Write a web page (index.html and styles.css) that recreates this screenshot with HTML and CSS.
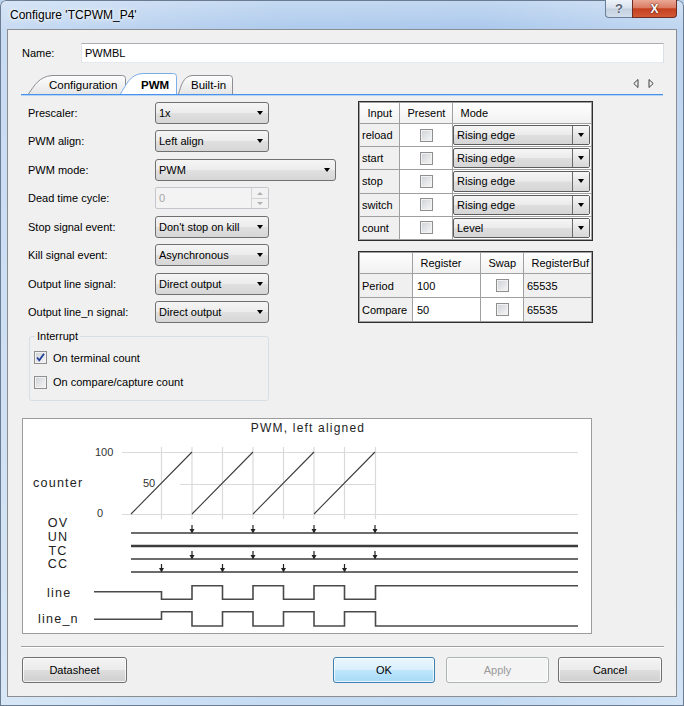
FILE: index.html
```html
<!DOCTYPE html>
<html>
<head>
<meta charset="utf-8">
<link rel="stylesheet" href="styles.css">
</head>
<body>
<div class="window">
  <div class="titlebar">
    <span class="title">Configure 'TCPWM_P4'</span>
    <div class="caption-btns">
      <span class="cbtn help">?</span>
      <span class="cbtn close">X</span>
    </div>
  </div>
  <div class="client">
    <div class="name-row">
      <span class="name-label">Name:</span>
      <div class="textbox">PWMBL</div>
    </div>
    <div class="tabstrip">
      <div class="tab tab-config">
        <svg class="tab-bg" width="98" height="19" viewBox="0 0 98 19"><defs><linearGradient id="tg1" x1="0" y1="0" x2="0" y2="1"><stop offset="0" stop-color="#fdfdfd"/><stop offset="1" stop-color="#e6e6e6"/></linearGradient></defs><path d="M0.5 19 C6 11 11 1.5 24 0.5 H94.5 Q97.5 0.5 97.5 3.5 V19" fill="url(#tg1)" stroke="#8c8e94"/></svg>
        <span class="tab-text">Configuration</span>
      </div>
      <div class="tab tab-pwm">
        <svg class="tab-bg" width="57" height="21" viewBox="0 0 57 21"><path d="M0.5 21 C6 12 10 1.5 22 0.5 H53.5 Q56.5 0.5 56.5 3.5 V21" fill="#ffffff" stroke="#7aaee8"/></svg>
        <span class="tab-text">PWM</span>
      </div>
      <div class="tab tab-builtin">
        <svg class="tab-bg" width="55" height="19" viewBox="0 0 55 19"><defs><linearGradient id="tg2" x1="0" y1="0" x2="0" y2="1"><stop offset="0" stop-color="#fdfdfd"/><stop offset="1" stop-color="#e6e6e6"/></linearGradient></defs><path d="M0.5 19 C3 11 5 1.5 14 0.5 H51.5 Q54.5 0.5 54.5 3.5 V19" fill="url(#tg2)" stroke="#8c8e94"/></svg>
        <span class="tab-text">Built-in</span>
      </div>
      <svg class="tab-arrows" width="22" height="9" viewBox="0 0 22 9"><path d="M5 0.5 V8.5 L0.8 4.5 Z" fill="none" stroke="#404040"/><path d="M16 0.5 V8.5 L20.2 4.5 Z" fill="none" stroke="#404040"/></svg>
    </div>

    <div class="page">
      <div class="top">
        <div class="form">
          <div class="fgrid">
            <span class="lbl">Prescaler:</span>
            <div class="select w114"><span>1x</span></div>
            <span class="lbl">PWM align:</span>
            <div class="select w114"><span>Left align</span></div>
            <span class="lbl">PWM mode:</span>
            <div class="select w181"><span>PWM</span></div>
            <span class="lbl">Dead time cycle:</span>
            <div class="spin w114"><span>0</span>
              <div class="spin-btns"><span class="sp-up"></span><span class="sp-down"></span></div>
            </div>
            <span class="lbl">Stop signal event:</span>
            <div class="select w114"><span>Don't stop on kill</span></div>
            <span class="lbl">Kill signal event:</span>
            <div class="select w114"><span>Asynchronous</span></div>
            <span class="lbl">Output line signal:</span>
            <div class="select w114"><span>Direct output</span></div>
            <span class="lbl">Output line_n signal:</span>
            <div class="select w114"><span>Direct output</span></div>
          </div>
          <fieldset class="group">
            <legend>Interrupt</legend>
            <div class="cbrow first"><span class="cb"><svg width="11" height="11" viewBox="0 0 11 11"><path d="M2 5.5 L4.3 8.3 L9 1.8" fill="none" stroke="#22409a" stroke-width="1.8"/></svg></span><span>On terminal count</span></div>
            <div class="cbrow"><span class="cb"></span><span>On compare/capture count</span></div>
          </fieldset>
        </div>

        <div class="tables">
          <div class="tbl tbl1">
            <div class="th">Input</div><div class="th">Present</div><div class="th">Mode</div>

            <div class="td rh">reload</div><div class="td cbc"><span class="cb"></span></div>
            <div class="td mc"><div class="combo"><span>Rising edge</span><span class="combo-btn"><i class="arrow"></i></span></div></div>

            <div class="td rh">start</div><div class="td cbc"><span class="cb"></span></div>
            <div class="td mc"><div class="combo"><span>Rising edge</span><span class="combo-btn"><i class="arrow"></i></span></div></div>

            <div class="td rh">stop</div><div class="td cbc"><span class="cb"></span></div>
            <div class="td mc"><div class="combo"><span>Rising edge</span><span class="combo-btn"><i class="arrow"></i></span></div></div>

            <div class="td rh">switch</div><div class="td cbc"><span class="cb"></span></div>
            <div class="td mc"><div class="combo"><span>Rising edge</span><span class="combo-btn"><i class="arrow"></i></span></div></div>

            <div class="td rh">count</div><div class="td cbc"><span class="cb"></span></div>
            <div class="td mc"><div class="combo"><span>Level</span><span class="combo-btn"><i class="arrow"></i></span></div></div>
          </div>

          <div class="tbl tbl2">
            <div class="th"></div><div class="th">Register</div><div class="th">Swap</div><div class="th">RegisterBuf</div>
            <div class="td rh">Period</div><div class="td wv">100</div><div class="td cbc"><span class="cb"></span></div><div class="td gv">65535</div>
            <div class="td rh">Compare</div><div class="td wv">50</div><div class="td cbc"><span class="cb"></span></div><div class="td gv">65535</div>
          </div>
        </div>
      </div>

      <div class="diagram">
        <svg width="570" height="216" viewBox="0 0 570 216">
          <rect x="0.5" y="0.5" width="569" height="215" fill="#ffffff" stroke="#9c9c9c"/>
          <text x="286" y="14" text-anchor="middle" class="ct">PWM, left aligned</text>
          <path d="M100 34.5H556 M100 96.5H556 M158 66.5H354 M139.5 29V101 M170 29V101 M200.5 29V101 M231 29V101 M261.5 29V101 M292 29V101 M322.5 29V101 M353.5 29V101" stroke="#dadada" stroke-width="1.2" fill="none"/>
          <path d="M109 96 L170 34 M170 96 L231 34 M231 96 L292 34 M292 96 L353 34" stroke="#3c3c3c" stroke-width="1.1" fill="none"/>
          <text x="73" y="37.5" class="num">100</text>
          <text x="121" y="69" class="num">50</text>
          <text x="75" y="99" class="num">0</text>
          <text x="11" y="68.5" class="lab">counter</text>
          <text x="36" y="109.3" text-anchor="middle" class="lab">OV</text>
          <text x="36" y="123" text-anchor="middle" class="lab">UN</text>
          <text x="36" y="136.5" text-anchor="middle" class="lab">TC</text>
          <text x="36" y="150.3" text-anchor="middle" class="lab">CC</text>
          <text x="25" y="178.5" class="lab">line</text>
          <text x="16" y="205" class="lab">line_n</text>
          <path d="M109 115H556 M109 141H556 M109 154H556" stroke="#3c3c3c" stroke-width="1.4" fill="none"/>
          <path d="M109 128H556" stroke="#3c3c3c" stroke-width="2.6" fill="none"/>
          <path d="M170 107V112 M231 107V112 M292 107V112 M353 107V112 M170 133V138 M231 133V138 M292 133V138 M353 133V138 M139.5 146V151 M200.5 146V151 M261.5 146V151 M322.5 146V151" stroke="#222" stroke-width="1.2" fill="none"/>
          <path d="M167.5 111H172.5L170 115.5Z M228.5 111H233.5L231 115.5Z M289.5 111H294.5L292 115.5Z M350.5 111H355.5L353 115.5Z M167.5 137H172.5L170 141.5Z M228.5 137H233.5L231 141.5Z M289.5 137H294.5L292 141.5Z M350.5 137H355.5L353 141.5Z M137 150H142L139.5 154.5Z M198 150H203L200.5 154.5Z M259 150H264L261.5 154.5Z M320 150H325L322.5 154.5Z" fill="#222"/>
          <path d="M72 173.7 H139.5 V181.3 H170 V167.7 H200.5 V181.3 H231 V167.7 H261.5 V181.3 H292 V167.7 H322.5 V181.3 H353.5 V167.7 H556" stroke="#4a4a4a" stroke-width="1.6" fill="none"/>
          <path d="M72 201.3 H139.5 V193.7 H170 V208 H200.5 V193.7 H231 V208 H261.5 V193.7 H292 V208 H322.5 V193.7 H353.5 V208 H556" stroke="#4a4a4a" stroke-width="1.6" fill="none"/>
        </svg>
      </div>
    </div>

    <div class="sep"></div>
    <div class="buttons">
      <div class="btn btn-datasheet">Datasheet</div>
      <div class="btn btn-ok">OK</div>
      <div class="btn btn-apply">Apply</div>
      <div class="btn btn-cancel">Cancel</div>
    </div>
  </div>
</div>
</body>
</html>
```

FILE: styles.css
```css
html, body {
  margin: 0;
  padding: 0;
}
body {
  font-family: "Liberation Sans", Arial, sans-serif;
  font-size: 11px;
  color: #000;
  background: #b9d2ee;
}
.window {
  width: 684px;
  height: 706px;
  box-sizing: border-box;
  overflow: hidden;
  background:
    linear-gradient(90deg, rgba(255,255,255,0.35) 0%, rgba(255,255,255,0.05) 40%, rgba(255,255,255,0) 70%, rgba(255,255,255,0.25) 100%),
    linear-gradient(180deg, #c3d8f1 0%, #aac8ec 30px, #b7d1ee 60%, #c2daf2 100%);
  box-shadow: inset 0 0 0 1px #6a7c92;
  border-radius: 6px 6px 0 0;
}
.titlebar {
  height: 29px;
  display: flex;
  align-items: flex-start;
  padding: 0 7px 0 10px;
}
.title {
  font-size: 12px;
  line-height: 12px;
  margin-top: 9px;
  color: #000;
  text-shadow: 0 0 6px #ffffff, 0 0 3px #ffffff;
}
.caption-btns {
  margin-left: auto;
  display: flex;
}
.cbtn {
  height: 18px;
  box-sizing: border-box;
  display: flex;
  align-items: center;
  justify-content: center;
  font-weight: bold;
  font-size: 13px;
}
.help {
  width: 27px;
  border: 1px solid #6a7f98;
  border-top: none;
  border-right: none;
  border-radius: 0 0 0 4px;
  background: linear-gradient(#eef3f9 0%, #d6e0ec 48%, #c3d0df 52%, #d2deeb 100%);
  color: #5a6676;
  text-shadow: 0 0 2px #fff;
}
.close {
  width: 45px;
  border: 1px solid #6e2d22;
  border-top: none;
  border-radius: 0 0 4px 0;
  background: linear-gradient(#e9a896 0%, #db7c64 45%, #c4401f 52%, #d35a36 100%);
  color: #ffffff;
  font-size: 12px;
  text-shadow: 0 0 2px #5a1a0e, 0 0 1px #5a1a0e;
}
.client {
  margin-left: 7px;
  width: 670px;
  height: 668px;
  box-sizing: border-box;
  border: 1px solid #8b8d90;
  background: #f0f0f0;
  position: relative;
}
.name-row {
  display: flex;
  align-items: center;
  margin-top: 13px;
  padding-left: 14px;
}
.name-label {
  width: 59px;
}
.textbox {
  width: 583px;
  height: 20px;
  box-sizing: border-box;
  border: 1px solid;
  border-color: #abadb3 #dbdfe6 #e3e9ef #e2e3ea;
  background: #ffffff;
  padding-left: 3px;
  display: flex;
  align-items: center;
}
.tabstrip {
  margin-top: 10px;
  margin-left: 13px;
  width: 642px;
  height: 21px;
  display: flex;
  align-items: flex-end;
  border-bottom: 1px solid #4a92e8;
  box-shadow: 0 1px 0 #b3d3f7;
}
.tab {
  position: relative;
  display: flex;
  align-items: center;
  box-sizing: border-box;
  font-size: 11.5px;
}
.tab-bg {
  position: absolute;
  left: 0;
  top: 0;
}
.tab-text {
  position: relative;
}
.tab-config {
  width: 98px;
  height: 19px;
  margin-left: 7px;
  padding-left: 21px;
  z-index: 1;
}
.tab-pwm {
  width: 57px;
  height: 21px;
  margin-left: -6px;
  padding-left: 21px;
  padding-top: 2px;
  font-weight: bold;
  z-index: 2;
}
.tab-builtin {
  width: 55px;
  height: 19px;
  margin-left: 1px;
  padding-left: 13px;
  z-index: 1;
}
.tab-arrows {
  align-self: flex-start;
  margin-top: 6px;
  margin-left: auto;
  margin-right: 8px;
}
.page {
  margin-left: 13px;
  width: 642px;
  padding-top: 6px;
}
.top {
  display: flex;
  align-items: flex-start;
}
.form {
  width: 337px;
  box-sizing: border-box;
  padding-left: 7px;
  margin-top: 1px;
}
.fgrid {
  display: grid;
  grid-template-columns: 127px auto;
  grid-auto-rows: 22px;
  row-gap: 6.43px;
  align-items: center;
}
.lbl {
  white-space: nowrap;
}
.w114 { width: 114px; }
.w181 { width: 181px; }
.select {
  height: 22px;
  box-sizing: border-box;
  border: 1px solid #707070;
  border-radius: 3px;
  background: linear-gradient(#f5f5f5 0%, #ececec 48%, #e0e0e0 52%, #d6d6d6 100%);
  display: flex;
  align-items: center;
  padding-left: 3px;
  white-space: nowrap;
}
.select::after {
  content: "";
  margin-left: auto;
  margin-right: 5px;
  border-left: 3.5px solid transparent;
  border-right: 3.5px solid transparent;
  border-top: 4px solid #000;
}
.spin {
  height: 22px;
  box-sizing: border-box;
  border: 1px solid #c3c6ca;
  border-radius: 2px;
  background: #f3f3f3;
  color: #a6a6a6;
  display: flex;
  align-items: center;
  padding-left: 3px;
}
.spin-btns {
  margin-left: auto;
  width: 16px;
  align-self: stretch;
  display: flex;
  flex-direction: column;
  border-left: 1px solid #d4d4d4;
}
.sp-up, .sp-down {
  flex: 1;
  display: flex;
  align-items: center;
  justify-content: center;
  background: #f2f2f2;
}
.sp-up {
  border-bottom: 1px solid #d4d4d4;
}
.sp-up::after {
  content: "";
  border-left: 3px solid transparent;
  border-right: 3px solid transparent;
  border-bottom: 3px solid #b0b0b0;
}
.sp-down::after {
  content: "";
  border-left: 3px solid transparent;
  border-right: 3px solid transparent;
  border-top: 3px solid #b0b0b0;
}
.group {
  margin: 7.5px 0 0 1px;
  width: 240px;
  box-sizing: border-box;
  border: 1px solid #d5dfe5;
  border-radius: 3px;
  padding: 0 4px 7.5px 4px;
  min-width: 0;
}
.group legend {
  padding: 0 2px;
  margin-left: 1px;
  line-height: 13px;
  height: 13px;
}
.cbrow {
  display: flex;
  align-items: center;
  height: 20px;
  gap: 6px;
  margin-top: 4.5px;
}
.cb {
  width: 13px;
  height: 13px;
  box-sizing: border-box;
  border: 1px solid #8f8f8f;
  background: linear-gradient(135deg, #cdd1d6 0%, #f7f7f7 100%);
  box-shadow: inset 0 0 0 1px #f2f2f2;
  display: inline-flex;
  align-items: center;
  justify-content: center;
  flex: none;
}
.tables {
  display: flex;
  flex-direction: column;
  gap: 10px;
  margin-top: 0;
}
.tbl {
  display: grid;
  width: 235px;
  box-sizing: border-box;
  border: 1px solid #2e2e2e;
  padding: 1px;
  gap: 1px;
  background: #a0a0a0;
}
.tbl1 {
  grid-template-columns: 39px 52px 1fr;
  grid-template-rows: 20px repeat(5, 1fr);
  height: 140px;
}
.tbl2 {
  grid-template-columns: 52px 67px 42px 1fr;
  grid-template-rows: 20px 1fr 1fr;
  height: 72px;
}
.th {
  background: linear-gradient(#fefefe, #f1f1f1);
  display: flex;
  align-items: center;
  padding-left: 7.5px;
  white-space: nowrap;
}
.td {
  display: flex;
  align-items: center;
  white-space: nowrap;
}
.rh {
  background: #f0f0f0;
  padding-left: 2px;
}
.cbc {
  background: #ffffff;
  justify-content: center;
}
.wv {
  background: #ffffff;
  padding-left: 4px;
}
.gv {
  background: #f0f0f0;
  padding-left: 3px;
}
.mc {
  background: #ffffff;
  align-items: stretch;
  padding: 1px 1px 1px 0;
}
.combo {
  flex: 1;
  display: flex;
  align-items: center;
  border: 1px solid #5c5c5c;
  border-radius: 2px;
  background: linear-gradient(#f6f6f6 0%, #ebebeb 48%, #dedede 52%, #d6d6d6 100%);
  padding-left: 3px;
}
.combo-btn {
  margin-left: auto;
  width: 16px;
  align-self: stretch;
  border-left: 1px solid #6a6a6a;
  display: flex;
  align-items: center;
  justify-content: center;
  background: linear-gradient(#f8f8f8 0%, #e6e6e6 50%, #d8d8d8 100%);
}
.arrow {
  display: block;
  border-left: 3.5px solid transparent;
  border-right: 3.5px solid transparent;
  border-top: 4px solid #000;
}
.diagram {
  margin-top: 17px;
  margin-left: 1px;
  width: 570px;
  height: 216px;
}
.diagram svg {
  display: block;
}
.ct {
  font-family: "Liberation Sans", Arial, sans-serif;
  font-size: 12px;
  letter-spacing: 1.2px;
  fill: #222;
}
.num {
  font-family: "Liberation Sans", Arial, sans-serif;
  font-size: 11px;
  fill: #333;
}
.lab {
  font-family: "Liberation Sans", Arial, sans-serif;
  font-size: 12.6px;
  letter-spacing: 1.2px;
  fill: #222;
}
.sep {
  margin-top: 12px;
  margin-left: 13px;
  width: 643px;
  border-top: 1px solid #a0a0a0;
  border-bottom: 1px solid #ffffff;
}
.buttons {
  margin-top: 9px;
  margin-left: 14px;
  width: 640px;
  display: flex;
}
.btn {
  height: 26px;
  box-sizing: border-box;
  border: 1px solid #707070;
  border-radius: 3px;
  background: linear-gradient(#f4f4f4 0%, #ebebeb 48%, #dddddd 52%, #cfcfcf 100%);
  box-shadow: inset 0 0 0 1px rgba(255,255,255,0.75);
  display: flex;
  align-items: center;
  justify-content: center;
}
.btn-datasheet { width: 105px; }
.btn-ok {
  width: 102px;
  margin-left: auto;
  border-color: #3c7fb1;
  background: linear-gradient(#eaf6fd 0%, #d9f0fc 48%, #bee6fd 52%, #a7d9f5 100%);
}
.btn-apply {
  width: 103px;
  margin-left: 11px;
  border-color: #adb2b5;
  background: #f4f4f4;
  color: #9a9a9a;
}
.btn-cancel {
  width: 104px;
  margin-left: 9px;
}
```
